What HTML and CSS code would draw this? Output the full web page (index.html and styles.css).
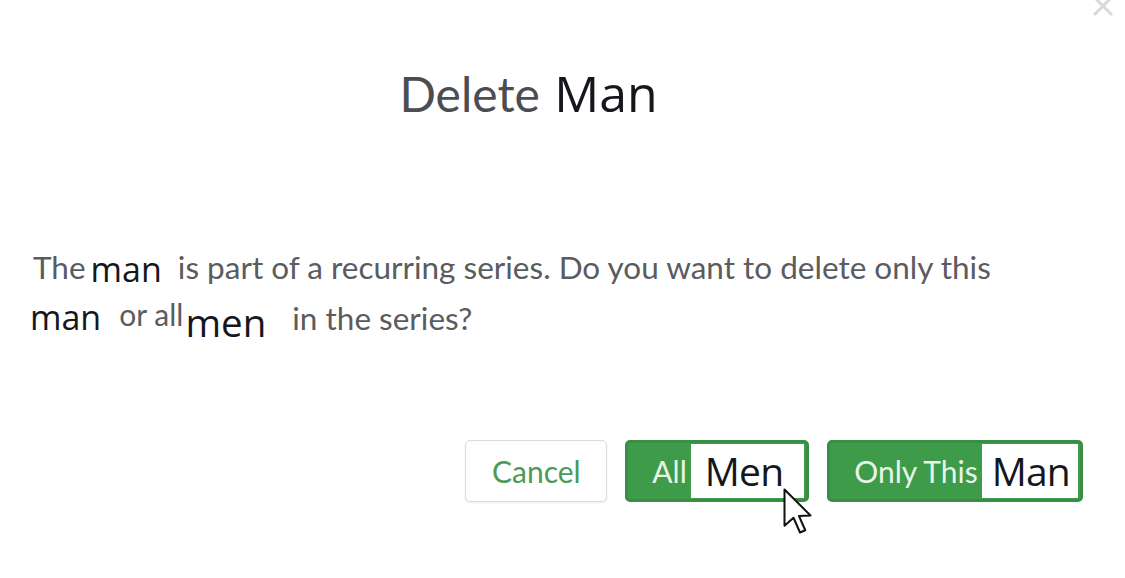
FILE: index.html
```html
<!DOCTYPE html>
<html lang="en">
<head>
    <meta charset="UTF-8">
    <title>Delete Man</title>
    <link rel="stylesheet" href="styles.css">
</head>
<body>
    <div class="dialog">
        <svg class="close" width="24" height="22" viewBox="0 0 24 22">
            <path d="M3 -3 L21 15 M21 -3 L3 15" stroke="#d9d9d9" stroke-width="3"/>
        </svg>

        <h1 class="title">Delete <span class="swap">Man</span></h1>

        <p class="message">
            The<span class="word w-man1">man</span> is part of a recurring series. Do you want to delete only this<br>
            <span class="word w-man2">man</span> <span class="small">or all</span><span class="word w-men">men</span> in the series?
        </p>

        <div class="actions">
            <button class="btn btn-cancel">Cancel</button>
            <button class="btn btn-green btn-all">All <span class="patch">Men</span></button>
            <button class="btn btn-green btn-only">Only This <span class="patch">Man</span></button>
            <!-- mouse pointer sitting over the "All Men" button -->
            <svg class="cursor" width="30" height="50" viewBox="0 0 12 20">
                <path d="M1 1 L1 15.5 L4.6 12.3 L7.2 18.2 L9.3 17.3 L6.8 11.6 L11.4 11.4 Z" fill="#fff" stroke="#111" stroke-width="0.8" stroke-linejoin="round"/>
            </svg>
        </div>
    </div>
</body>
</html>
```

FILE: styles.css
```css
body {
    margin: 0;
    background: #fff;
    font-family: Lato, "Open Sans", sans-serif;
}
.dialog {
    position: relative;
    width: 1125px;
    height: 578px;
    box-sizing: border-box;
    padding: 0 42px 0 30px;
    overflow: hidden;
}
.close {
    position: absolute;
    top: 0;
    right: 10px;
}
.title {
    margin: 0;
    padding: 63px 56px 0 0;
    text-align: center;
    font-weight: 400;
    font-size: 48px;
    line-height: 60px;
    color: #4b4d52;
}
.title .swap {
    font-family: "Open Sans", sans-serif;
    font-size: 50px;
    color: #15171c;
    margin-left: 2px;
}
.message {
    margin: 118px 0 0 3px;
    font-size: 31.5px;
    line-height: 48px;
    color: #5a5c60;
}
.word {
    font-family: "Open Sans", sans-serif;
    color: #15171c;
}
.w-man1 {
    font-size: 34px;
    margin: 0 8px 0 5px;
    position: relative;
    top: 3px;
}
.w-man2 {
    font-size: 34px;
    margin-left: -3px;
    margin-right: 10px;
}
.small {
    font-size: 30px;
    position: relative;
    top: -4px;
}
.w-men {
    font-size: 38.5px;
    margin: 0 18px 0 2px;
    position: relative;
    top: 7px;
}
.actions {
    position: relative;
    display: flex;
    justify-content: flex-end;
    gap: 18px;
    margin-top: 98px;
}
.btn {
    height: 62px;
    box-sizing: border-box;
    border-radius: 5px;
    font-family: Lato, sans-serif;
    font-size: 30px;
    letter-spacing: 0;
    display: flex;
    align-items: center;
    padding: 0;
    cursor: pointer;
}
.btn-cancel {
    width: 142px;
    justify-content: center;
    background: #fff;
    border: 1.5px solid #dcdcdc;
    color: #4b9a55;
    box-shadow: 0 1px 2px rgba(0, 0, 0, 0.08);
}
.btn-green {
    background: #3d9b49;
    border: 3px solid #378f43;
    color: #e8f5e6;
    padding: 0 2px 0 24px;
    gap: 4px;
}
.patch {
    background: #fff;
    color: #15171c;
    font-family: "Open Sans", sans-serif;
    font-size: 39px;
    letter-spacing: -0.8px;
    height: 54px;
    line-height: 54px;
    padding: 0 8px 0 10px;
    align-self: center;
}
.btn-all .patch {
    padding: 0 21px 0 14px;
}
.cursor {
    position: absolute;
    left: 752px;
    top: 47px;
}
```
